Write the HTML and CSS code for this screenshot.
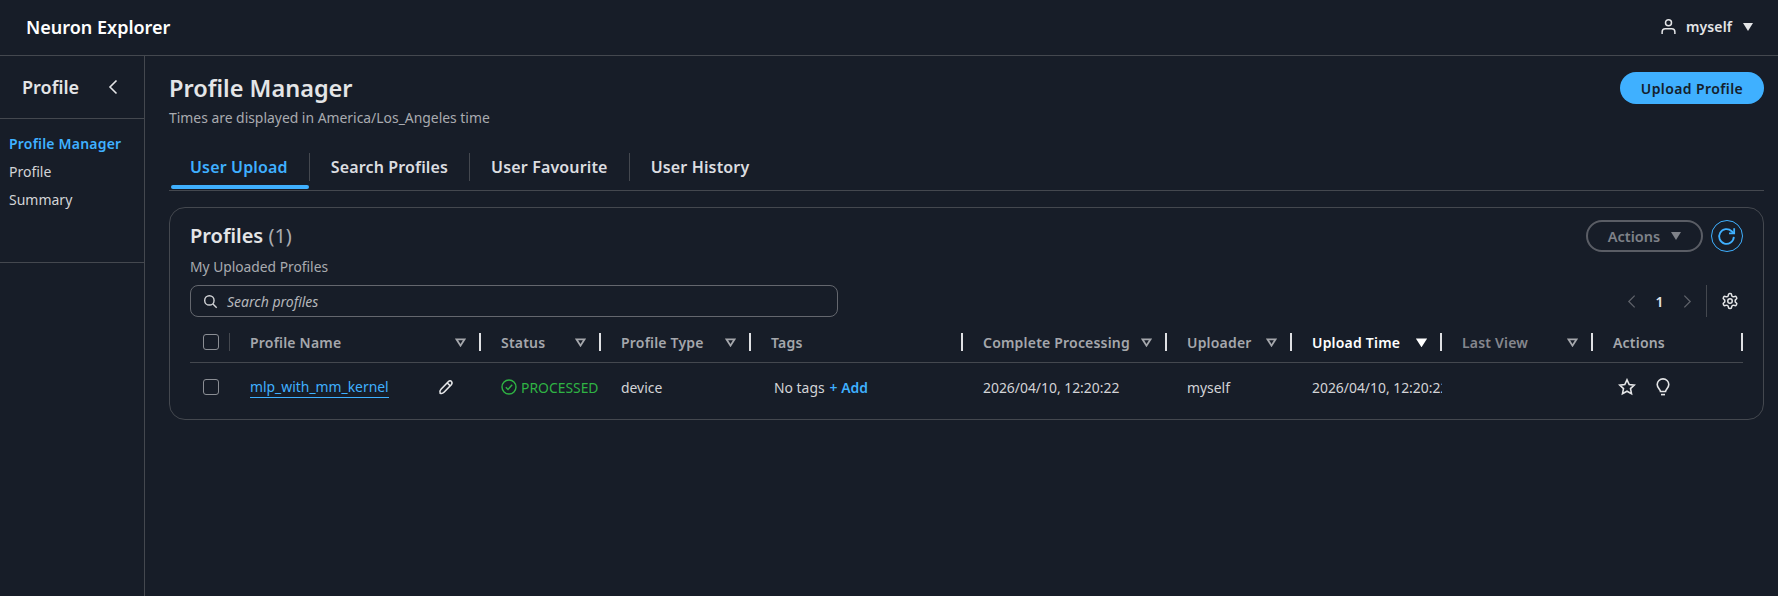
FILE: index.html
```html
<!DOCTYPE html>
<html lang="en">
  <head>
    <meta charset="UTF-8" />
    <title>Neuron Explorer</title>
    <link rel="stylesheet" href="styles.css">
  </head>
  <body>
    <div class="topbar">
      <div class="brand">Neuron Explorer</div>
      <div class="user">
        <svg class="user-icon" viewBox="0 0 16 18" fill="none" stroke="currentColor" stroke-width="1.6"><circle cx="8" cy="5" r="3.2"/><path d="M1.2 17v-2.2c0-2 1.5-3.3 3.4-3.3h6.8c1.9 0 3.4 1.3 3.4 3.3V17"/></svg>
        <span>myself</span>
        <span class="caret"></span>
      </div>
    </div>

    <div class="layout">
      <div class="sidebar">
        <div class="sidebar-head">
          <span>Profile</span>
          <svg class="collapse" viewBox="0 0 10 16" fill="none" stroke="currentColor" stroke-width="1.6"><path d="M8.5 1.5 2 8l6.5 6.5"/></svg>
        </div>
        <div class="side-nav">
          <div class="side-item active">Profile Manager</div>
          <div class="side-item">Profile</div>
          <div class="side-item">Summary</div>
        </div>
      </div>

      <div class="main">
        <div class="page-head">
          <div>
            <h1>Profile Manager</h1>
            <p class="subtitle">Times are displayed in America/Los_Angeles time</p>
          </div>
          <button class="btn-primary">Upload Profile</button>
        </div>

        <div class="tabs">
          <div class="tab active">User Upload</div>
          <div class="tab">Search Profiles</div>
          <div class="tab">User Favourite</div>
          <div class="tab">User History</div>
        </div>

        <div class="card">
          <div class="card-head">
            <div>
              <h2>Profiles <span class="count">(1)</span></h2>
              <p class="card-sub">My Uploaded Profiles</p>
            </div>
            <div class="card-actions">
              <button class="btn-outline">Actions <span class="caret caret-muted"></span></button>
              <button class="btn-refresh">
                <svg viewBox="0 0 20 20" fill="none" stroke="currentColor" stroke-width="1.7"><path d="M17 10.400a7 7 0 1 1-2.100-5.400l2 1.900"/><path d="M17.300 2.200v4.900h-4.900"/></svg>
              </button>
            </div>
          </div>

          <div class="toolbar">
            <div class="search">
              <svg viewBox="0 0 16 16" fill="none" stroke="currentColor" stroke-width="1.5"><circle cx="6.8" cy="6.8" r="5"/><path d="m10.6 10.6 4 4"/></svg>
              <span>Search profiles</span>
            </div>
            <div class="pager">
              <svg class="pager-arrow" viewBox="0 0 10 16" fill="none" stroke="currentColor" stroke-width="1.4"><path d="M8.5 1.5 2 8l6.5 6.5"/></svg>
              <span class="page-num">1</span>
              <svg class="pager-arrow" viewBox="0 0 10 16" fill="none" stroke="currentColor" stroke-width="1.4"><path d="M1.5 1.5 8 8l-6.5 6.5"/></svg>
              <div class="pager-sep"></div>
              <svg class="gear" viewBox="0 0 24 24" fill="none" stroke="currentColor" stroke-width="2"><path d="M12.22 2h-.44a2 2 0 0 0-2 2v.18a2 2 0 0 1-1 1.73l-.43.25a2 2 0 0 1-2 0l-.15-.08a2 2 0 0 0-2.73.73l-.22.38a2 2 0 0 0 .73 2.73l.15.1a2 2 0 0 1 1 1.72v.51a2 2 0 0 1-1 1.74l-.15.09a2 2 0 0 0-.73 2.73l.22.38a2 2 0 0 0 2.73.73l.15-.08a2 2 0 0 1 2 0l.43.25a2 2 0 0 1 1 1.73V20a2 2 0 0 0 2 2h.44a2 2 0 0 0 2-2v-.18a2 2 0 0 1 1-1.73l.43-.25a2 2 0 0 1 2 0l.15.08a2 2 0 0 0 2.73-.73l.22-.39a2 2 0 0 0-.73-2.73l-.15-.08a2 2 0 0 1-1-1.74v-.5a2 2 0 0 1 1-1.74l.15-.09a2 2 0 0 0 .73-2.73l-.22-.38a2 2 0 0 0-2.730-.73l-.15.08a2 2 0 0 1-2 0l-.43-.25a2 2 0 0 1-1-1.73V4a2 2 0 0 0-2-2z"/><circle cx="12" cy="12" r="3"/></svg>
            </div>
          </div>

          <div class="grid-row grid-header">
            <div class="cell cell-check"><span class="checkbox"></span><span class="check-sep"></span></div>
            <div class="cell cell-name">Profile Name<svg class="filter" viewBox="0 0 12 10"><path d="M1.500 1.500h9L6 8.500z"/></svg><span class="bar"></span></div>
            <div class="cell">Status<svg class="filter" viewBox="0 0 12 10"><path d="M1.500 1.500h9L6 8.500z"/></svg><span class="bar"></span></div>
            <div class="cell">Profile Type<svg class="filter" viewBox="0 0 12 10"><path d="M1.500 1.500h9L6 8.500z"/></svg><span class="bar"></span></div>
            <div class="cell">Tags<span class="bar"></span></div>
            <div class="cell">Complete Processing<svg class="filter" viewBox="0 0 12 10"><path d="M1.500 1.500h9L6 8.500z"/></svg><span class="bar"></span></div>
            <div class="cell">Uploader<svg class="filter" viewBox="0 0 12 10"><path d="M1.500 1.500h9L6 8.500z"/></svg><span class="bar"></span></div>
            <div class="cell cell-sorted">Upload Time<svg class="filter filter-on" viewBox="0 0 12 10"><path d="M1.500 1.500h9L6 8.500z"/></svg><span class="bar"></span></div>
            <div class="cell cell-dim">Last View<svg class="filter" viewBox="0 0 12 10"><path d="M1.500 1.500h9L6 8.500z"/></svg><span class="bar"></span></div>
            <div class="cell">Actions<span class="bar"></span></div>
          </div>

          <div class="grid-row grid-data">
            <div class="cell cell-check"><span class="checkbox"></span></div>
            <div class="cell cell-name">
              <a class="profile-link">mlp_with_mm_kernel</a>
              <svg class="pencil" viewBox="0 0 16 16" fill="none" stroke="currentColor" stroke-width="1.600"><path d="M10.500 2.500c1-1 2.200-1 3 0s.8 2 0 3l-7.500 7.800c-1 1-2.600 1.400-3.800 1-.6-1.300-.2-3 .8-4z"/><path d="m9.300 4 3 2.800"/></svg>
            </div>
            <div class="cell cell-status">
              <svg class="status-icon" viewBox="0 0 16 16" fill="none" stroke="currentColor" stroke-width="1.400"><circle cx="8" cy="8" r="7"/><path d="m4.800 8.200 2.200 2.200 4.200-4.600"/></svg>
              <span>PROCESSED</span>
            </div>
            <div class="cell">device</div>
            <div class="cell cell-tags">No tags <a class="add-link">+ Add</a></div>
            <div class="cell">2026/04/10, 12:20:22</div>
            <div class="cell">myself</div>
            <div class="cell">2026/04/10, 12:20:22</div>
            <div class="cell"></div>
            <div class="cell cell-icons">
              <svg viewBox="0 0 18 18" fill="none" stroke="currentColor" stroke-width="1.600"><path d="m9 1.800 2.200 4.700 5.100.6-3.800 3.500 1 5.100L9 13.200l-4.500 2.500 1-5.100-3.800-3.500 5.100-.6z"/></svg>
              <svg viewBox="0 0 18 18" fill="none" stroke="currentColor" stroke-width="1.600"><path d="M6.500 13.500c0-2-3.300-3.500-3.300-7A5.800 5.800 0 0 1 9 .9a5.800 5.800 0 0 1 5.800 5.600c0 3.500-3.300 5-3.300 7z"/><path d="M7 16.600h4"/></svg>
            </div>
          </div>
        </div>
      </div>
    </div>
  </body>
</html>
```

FILE: styles.css
```css
* {
  box-sizing: border-box;
}

body {
  margin: 0;
  height: 596px;
  overflow: hidden;
  background: #171d28;
  color: #e4e5e7;
  font-family: "Noto Sans", "Open Sans", sans-serif;
  font-size: 14px;
}

h1, h2, p {
  margin: 0;
}

.topbar {
  display: flex;
  align-items: center;
  justify-content: space-between;
  height: 56px;
  padding: 0 25px 2px 26px;
  border-bottom: 1px solid #44484f;
}

.brand {
  font-size: 18px;
  font-weight: 600;
  color: #fff;
}

.user {
  display: flex;
  align-items: center;
  font-weight: 600;
  font-size: 14px;
  letter-spacing: 0.1px;
}

.user-icon {
  width: 15px;
  height: 17px;
  margin-right: 10px;
}

.caret {
  display: inline-block;
  width: 0;
  height: 0;
  margin-left: 11px;
  border-left: 5px solid transparent;
  border-right: 5px solid transparent;
  border-top: 8px solid #e4e5e7;
}

.layout {
  display: flex;
  height: 540px;
}

.sidebar {
  width: 145px;
  border-right: 1px solid #44484f;
}

.sidebar-head {
  display: flex;
  align-items: center;
  justify-content: space-between;
  height: 63px;
  padding: 0 26px 0 22px;
  border-bottom: 1px solid #44484f;
  font-size: 18px;
  font-weight: 600;
}

.collapse {
  width: 10px;
  height: 16px;
}

.side-nav {
  height: 144px;
  padding: 11px 0 0 9px;
  border-bottom: 1px solid #44484f;
}

.side-item {
  height: 28px;
  line-height: 27px;
  color: #d3d4d7;
}

.side-item.active {
  color: #3fb0ff;
  font-weight: 600;
  letter-spacing: 0.2px;
}

.main {
  flex: 1;
  padding: 16px 14px 0 24px;
}

.page-head {
  display: flex;
  justify-content: space-between;
  height: 61px;
}

h1 {
  font-size: 23.500px;
  font-weight: 600;
  line-height: 32px;
}

.subtitle {
  margin-top: 4px;
  font-size: 13.900px;
  line-height: 20px;
  color: #a9abb0;
}

.btn-primary {
  width: 144px;
  height: 32px;
  border: none;
  border-radius: 16px;
  background: #3fb0ff;
  color: #14202c;
  font-family: inherit;
  font-size: 14px;
  font-weight: 600;
  letter-spacing: 0.4px;
}

.tabs {
  display: flex;
  height: 58px;
  padding: 20px 0 0 2px;
  border-bottom: 1px solid #44484f;
  margin-bottom: 16px;
}

.tab {
  position: relative;
  height: 28px;
  padding: 0 21px;
  border-right: 1px solid #44484f;
  font-size: 16px;
  font-weight: 600;
  line-height: 28px;
  letter-spacing: 0.15px;
  color: #dcdde0;
}

.tab:first-child {
  padding-left: 19px;
}

.tab:last-child {
  border-right: none;
}

.tab.active {
  color: #3fb0ff;
}

.tab.active::after {
  content: "";
  position: absolute;
  left: 0;
  right: 0;
  bottom: -8px;
  height: 4px;
  border-radius: 2px;
  background: #3fb0ff;
}

.card {
  height: 213px;
  padding: 12px 20px 0 20px;
  border: 1px solid #44484f;
  border-radius: 16px;
}

.card-head {
  display: flex;
  justify-content: space-between;
  height: 65px;
}

h2 {
  font-size: 20px;
  font-weight: 600;
  line-height: 32px;
}

.count {
  font-weight: 400;
  color: #a9abb0;
}

.card-sub {
  margin-top: 5px;
  font-size: 13.800px;
  color: #a9abb0;
}

.card-actions {
  display: flex;
  gap: 8px;
}

.btn-outline {
  display: flex;
  align-items: center;
  justify-content: center;
  width: 117px;
  height: 32px;
  border: 2px solid #5a5d65;
  border-radius: 16px;
  background: transparent;
  color: #7f8289;
  font-family: inherit;
  font-size: 14.500px;
  font-weight: 600;
}

.caret-muted {
  border-top-color: #7f8289;
}

.btn-refresh {
  width: 32px;
  height: 32px;
  padding: 4px;
  border: 1.500px solid #3fb0ff;
  border-radius: 50%;
  background: transparent;
  color: #3fb0ff;
}

.btn-refresh svg {
  display: block;
  width: 21px;
  height: 21px;
}

.toolbar {
  display: flex;
  align-items: center;
  justify-content: space-between;
  height: 32px;
}

.search {
  display: flex;
  align-items: center;
  gap: 9px;
  width: 648px;
  height: 32px;
  padding-left: 12px;
  border: 1px solid #64676e;
  border-radius: 8px;
  font-size: 14px;
  font-style: italic;
  color: #b5b7bb;
}

.search svg {
  width: 15px;
  height: 15px;
  color: #d3d4d7;
}

.pager {
  display: flex;
  align-items: center;
  height: 32px;
}

.pager-arrow {
  width: 9px;
  height: 15px;
  color: #5f626a;
}

.page-num {
  width: 47px;
  text-align: center;
  font-weight: 600;
}

.pager-sep {
  width: 1px;
  height: 32px;
  margin: 0 14px;
  background: #44484f;
}

.gear {
  width: 18px;
  height: 18px;
  margin-right: 4px;
}

.grid-row {
  display: grid;
  grid-template-columns: 41px 250px 120px 150px 212px 204px 125px 150px 151px 150px;
  width: 1553px;
}

.grid-header {
  height: 45px;
  margin-top: 1px;
  padding-top: 10px;
  border-bottom: 1px solid #44484f;
  font-size: 14px;
  font-weight: 600;
  letter-spacing: 0.2px;
  color: #a5a7ac;
}

.cell {
  position: relative;
  display: flex;
  align-items: center;
  padding-left: 20px;
  white-space: nowrap;
  overflow: hidden;
}

.cell-name {
  padding-left: 19px;
}

.grid-header .cell {
  height: 28px;
}

.cell-check {
  padding-left: 13px;
}

.checkbox {
  display: block;
  width: 16px;
  height: 16px;
  border: 1px solid #8b8e94;
  border-radius: 3px;
}

.check-sep {
  position: absolute;
  right: 1px;
  top: 5px;
  width: 1px;
  height: 18px;
  background: #44484f;
}

.filter {
  position: absolute;
  right: 15px;
  top: 10px;
  width: 11px;
  height: 9px;
  fill: none;
  stroke: #a5a7ac;
  stroke-width: 2;
}

.filter-on {
  fill: #fff;
  stroke: #fff;
}

.bar {
  position: absolute;
  right: 0;
  top: 5px;
  width: 2px;
  height: 18px;
  background: #dfe0e3;
}

.cell-sorted {
  color: #fff;
}

.cell-dim {
  color: #85878e;
}

.grid-data {
  height: 48px;
  font-size: 13.900px;
  color: #d3d4d7;
}

.profile-link {
  padding-bottom: 1px;
  border-bottom: 1px solid #3fb0ff;
  color: #3fb0ff;
}

.pencil {
  position: absolute;
  right: 27px;
  top: 16px;
  width: 16px;
  height: 16px;
  color: #e4e5e7;
}

.cell-status {
  color: #2fb344;
}

.status-icon {
  flex: none;
  width: 16px;
  height: 16px;
  margin-right: 4px;
}

.cell-tags {
  padding-left: 23px;
}

.add-link {
  margin-left: 5px;
  color: #3fb0ff;
  font-weight: 600;
}

.cell-icons {
  gap: 18px;
  padding-left: 25px;
}

.cell-icons svg {
  width: 18px;
  height: 18px;
  color: #e4e5e7;
}
```
